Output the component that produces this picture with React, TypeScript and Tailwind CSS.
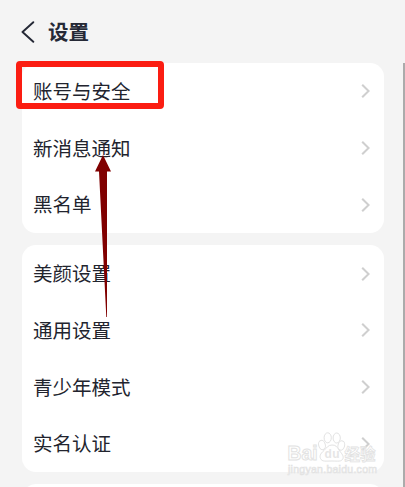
const groups = [
  { id: 'account', items: ['账号与安全', '新消息通知', '黑名单'] },
  { id: 'general', items: ['美颜设置', '通用设置', '青少年模式', '实名认证'] },
];

function SettingsRow({ label }: { label: string }) {
  return (
    <li className="flex h-[56.75px] items-center justify-between pl-[11px] pr-[14px]">
      <span className="pb-[1.5px] text-[19.5px] leading-none text-[#22242e]">{label}</span>
      <svg className="h-[14px] w-[9px]" viewBox="0 0 9 14" fill="none">
        <path d="M1.2 0.8 L7.6 7 L1.2 13.2" stroke="#cfcfcf" strokeWidth="2.1" />
      </svg>
    </li>
  );
}

function Watermark() {
  return (
    <div className="absolute left-[287px] top-[431px] h-[46px] w-[94px]">
      <svg
        className="h-full w-full overflow-visible"
        viewBox="0 0 94 46"
        fill="#ffffff"
        stroke="#e2e2e2"
        strokeWidth="1"
      >
        <ellipse cx="35" cy="14" rx="3.3" ry="4.7" transform="rotate(-15 35 14)" />
        <ellipse cx="40.7" cy="6.8" rx="3.6" ry="5" />
        <ellipse cx="49.7" cy="7" rx="3.6" ry="5" />
        <ellipse cx="54.3" cy="14.5" rx="3.3" ry="4.7" transform="rotate(15 54.3 14.5)" />
        <path d="M45 14 C41 14 39.5 17 37 19.5 C33 23 32.5 25 33.5 27.5 C35 31 39 30 45 30 C51 30 54.5 31 56 27.5 C57 24.5 54 22 52 19 C50 15.5 48.5 14 45 14Z" />
        <g fontFamily="'Liberation Sans', sans-serif" fontWeight="bold">
          <text x="0.5" y="29" fontSize="20" textLength="30" lengthAdjust="spacingAndGlyphs">Bai</text>
          <text x="37.5" y="27" fontSize="12" textLength="15" fill="#e6e6e6" stroke="none">du</text>
        </g>
        <text x="57.5" y="28.5" fontSize="16" fontWeight="bold" textLength="31" lengthAdjust="spacingAndGlyphs" fillOpacity="0.5" strokeWidth="0.8">经验</text>
        <text
          x="1"
          y="42"
          fontSize="10.5"
          fontFamily="'Liberation Sans', sans-serif"
          textLength="89"
          strokeWidth="0.7"
        >
          jingyan.baidu.com
        </text>
      </svg>
    </div>
  );
}

export default function App() {
  return (
    <div className="relative flex h-[487px] w-[405px] flex-col overflow-hidden bg-[#f4f4f4] font-['Noto_Sans_CJK_SC','Noto_Sans',sans-serif]">
      <header className="flex h-[63px] shrink-0 items-center gap-[13px] pl-[21px]">
        <svg className="h-[22px] w-[14px]" viewBox="0 0 14 22" fill="none">
          <path d="M12.3 1.2 L1.5 11 L12.3 20.8" stroke="#252936" strokeWidth="1.9" strokeLinecap="round" strokeLinejoin="round" />
        </svg>
        <h1 className="text-[20.5px] font-bold leading-none text-[#252936]">设置</h1>
      </header>

      <main className="flex flex-col gap-[12px] pl-[22px] pr-[21px]">
        {groups.map((group) => (
          <ul key={group.id} className="rounded-[14px] bg-white">
            {group.items.map((item) => (
              <SettingsRow key={item} label={item} />
            ))}
          </ul>
        ))}
        <div className="h-[56px] rounded-[14px] bg-white" />
      </main>

      {/* Scrollbar */}
      <div className="absolute bottom-0 right-0 top-[63px] w-[2px] bg-[#ababab]" />

      <Watermark />

      {/* Highlight and pointer for the account row */}
      <div className="absolute left-[16px] top-[61px] h-[48px] w-[148px] rounded-[4px] border-6 border-[#fb1d12]" />
      <svg className="absolute left-[95px] top-[155px] h-[163px] w-[17px]" viewBox="0 0 17 163">
        <path d="M8 0 L16 16.5 H12 V162 H11.3 L4 16.5 H0 Z" fill="#800000" />
      </svg>
    </div>
  );
}
